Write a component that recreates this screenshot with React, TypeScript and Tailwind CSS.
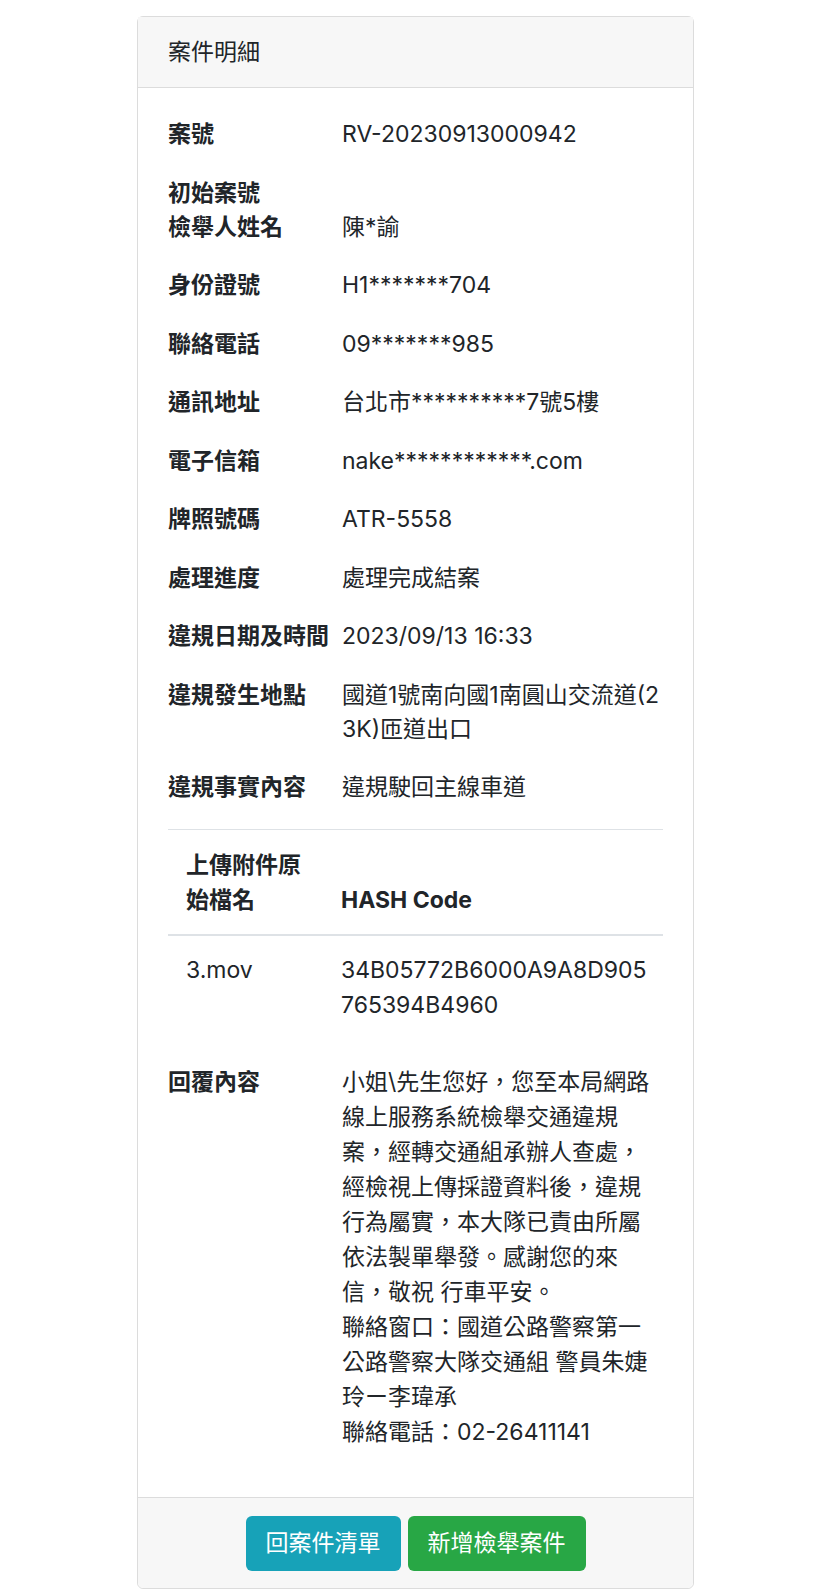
import React from "react";

const font = { fontFamily: '"Inter", "Noto Sans CJK TC", sans-serif' };

interface Field {
  label: string;
  value: React.ReactNode;
  tight?: boolean;
}

const fields: Field[] = [
  { label: "案號", value: "RV-20230913000942" },
  { label: "初始案號", value: "", tight: true },
  { label: "檢舉人姓名", value: "陳*諭" },
  { label: "身份證號", value: "H1*******704" },
  { label: "聯絡電話", value: "09*******985" },
  { label: "通訊地址", value: "台北市**********7號5樓" },
  { label: "電子信箱", value: "nake************.com" },
  { label: "牌照號碼", value: "ATR-5558" },
  { label: "處理進度", value: "處理完成結案" },
  { label: "違規日期及時間", value: "2023/09/13 16:33" },
  {
    label: "違規發生地點",
    value: (
      <>
        <div>國道1號南向國1南圓山交流道(2</div>
        <div>3K)匝道出口</div>
      </>
    ),
  },
  { label: "違規事實內容", value: "違規駛回主線車道" },
];

const reply = [
  "小姐\\先生您好，您至本局網路",
  "線上服務系統檢舉交通違規",
  "案，經轉交通組承辦人查處，",
  "經檢視上傳採證資料後，違規",
  "行為屬實，本大隊已責由所屬",
  "依法製單舉發。感謝您的來",
  "信，敬祝 行車平安。",
  "聯絡窗口：國道公路警察第一",
  "公路警察大隊交通組 警員朱婕",
  "玲ー李瑋承",
  "聯絡電話：02-26411141",
];

export default function App() {
  return (
    <div className="min-h-[1596px] bg-white pt-4 text-[#212529]" style={font}>
      <div className="ml-[137px] w-[557px] rounded-md border border-[#dcdcdc] bg-white">
        {/* Header */}
        <div className="border-b border-[#dcdcdc] bg-[#f7f7f7] px-[30px] py-[18px] text-[23px] leading-[34px]">
          案件明細
        </div>

        {/* Body */}
        <div className="px-[30px] pb-[47px] pt-[29px] text-[23px] leading-[34px]">
          {fields.map((f) => (
            <div
              key={f.label}
              className={
                "grid grid-cols-[174px_1fr] " + (f.tight ? "" : "mb-[24.5px]")
              }
            >
              <div className="whitespace-nowrap font-bold">{f.label}</div>
              <div className="whitespace-nowrap">{f.value}</div>
            </div>
          ))}

          {/* Attachments */}
          <div className="mb-[24px] border-t border-[#dee2e6] leading-[35px]">
            <div className="grid grid-cols-[155px_1fr] items-end border-b-2 border-[#dee2e6]">
              <div className="px-[18px] pb-[16px] pt-[18px] font-bold">
                上傳附件原
                <br />
                始檔名
              </div>
              <div className="px-[18px] pb-[16px] pt-[18px] font-bold">
                HASH Code
              </div>
            </div>
            <div className="grid grid-cols-[155px_1fr]">
              <div className="px-[18px] py-[17.5px]">3.mov</div>
              <div className="whitespace-nowrap px-[18px] py-[17.5px]">
                <div>34B05772B6000A9A8D905</div>
                <div>765394B4960</div>
              </div>
            </div>
          </div>

          <div className="grid grid-cols-[174px_1fr] leading-[35px]">
            <div className="font-bold">回覆內容</div>
            <div className="whitespace-nowrap">
              {reply.map((line) => (
                <div key={line}>{line}</div>
              ))}
            </div>
          </div>
        </div>

        {/* Footer */}
        <div className="flex justify-center gap-[7px] rounded-b-md border-t border-[#dcdcdc] bg-[#f7f7f7] pb-[17px] pt-[18px]">
          <button className="rounded-[6px] bg-[#17a2b8] px-[20px] py-[10px] text-[23px] leading-[35px] text-white">
            回案件清單
          </button>
          <button className="rounded-[6px] bg-[#28a745] px-[20px] py-[10px] text-[23px] leading-[35px] text-white">
            新增檢舉案件
          </button>
        </div>
      </div>
    </div>
  );
}
